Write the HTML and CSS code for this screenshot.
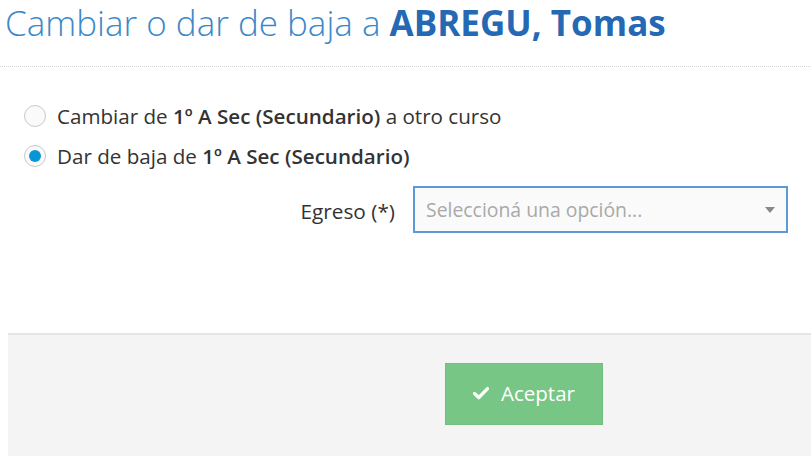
FILE: index.html
```html
<!DOCTYPE html>
<html lang="es">
<head>
<meta charset="utf-8">
<title>Cambiar o dar de baja</title>
<link rel="stylesheet" href="styles.css">
</head>
<body>
<div class="modal">
  <header class="modal-header">
    <h1 class="title">Cambiar o dar de baja a <strong>ABREGU, Tomas</strong></h1>
  </header>
  <section class="modal-body">
    <label class="radio-row">
      <span class="radio"></span>
      <span class="radio-text">Cambiar de <b>1º A Sec (Secundario)</b> a otro curso</span>
    </label>
    <label class="radio-row">
      <span class="radio checked"></span>
      <span class="radio-text">Dar de baja de <b>1º A Sec (Secundario)</b></span>
    </label>
    <div class="field">
      <span class="field-label">Egreso (*)</span>
      <div class="select">
        <span class="placeholder">Seleccioná una opción...</span>
        <span class="caret"></span>
      </div>
    </div>
  </section>
  <footer class="modal-footer">
    <button class="btn-ok" type="button">
      <svg class="check" viewBox="0 0 16 16" width="16" height="16"><path d="M1.5 8.5 L5.8 12.6 L14.5 3.6" fill="none" stroke="#fff" stroke-width="3.4" stroke-linecap="round" stroke-linejoin="round"/></svg>
      <span>Aceptar</span>
    </button>
  </footer>
</div>
</body>
</html>
```

FILE: styles.css
```css
* { box-sizing: border-box; }
html, body { margin: 0; padding: 0; background: #fff; }
body { font-family: "Open Sans", "Noto Sans", sans-serif; color: #333; width: 811px; height: 473px; overflow: hidden; }

.modal-header {
  border-bottom: 1px dotted #d6d6d6;
  height: 67px;
  padding: 0 5px;
}
.title {
  margin: 0;
  padding-top: 0;
  font-size: 35px;
  font-weight: 300;
  color: #3b88c9;
  line-height: 46px;
  white-space: nowrap;
}
.title strong { font-weight: 700; color: #2568b3; }

.modal-body {
  height: 266px;
  padding: 37px 0 0 24px;
}
.radio-row {
  display: flex;
  align-items: center;
  height: 24px;
  margin-bottom: 16px;
  font-size: 20.6px;
  color: #333;
}
.radio {
  width: 22px;
  height: 22px;
  border-radius: 50%;
  border: 1px solid #c9c9c9;
  background: #fafafa;
  margin-right: 11px;
  flex: none;
  position: relative;
}
.radio.checked::after {
  content: "";
  position: absolute;
  left: 4px; top: 4px;
  width: 12px; height: 12px;
  border-radius: 50%;
  background: #0996d7;
}
.radio-text b { font-weight: 600; }

.field {
  display: flex;
  align-items: center;
  margin-top: 18px;
  padding-left: 252px;
}
.field-label {
  font-size: 20.8px;
  color: #333;
  width: 137px;
  text-align: right;
  padding-right: 18px;
  padding-top: 2px;
}
.select {
  width: 375px;
  height: 47px;
  border: 2px solid #5a9ad6;
  background: #fafafa;
  display: flex;
  align-items: center;
  justify-content: space-between;
  padding: 0 11px 0 11px;
}
.placeholder { font-size: 19.4px; color: #a9a9a9; }
.caret {
  width: 0; height: 0;
  border-left: 5px solid transparent;
  border-right: 5px solid transparent;
  border-top: 6px solid #888;
}

.modal-footer {
  margin-left: 8px;
  height: 123px;
  background: #f4f4f4;
  border-top: 2px solid #e6e6e6;
  padding-top: 28px;
  padding-left: 437px;
}
.btn-ok {
  width: 158px;
  height: 62px;
  background: #78c685;
  border: 1px solid #6fc17d;
  color: #fff;
  font-family: "Open Sans", "Noto Sans", sans-serif;
  font-size: 20.5px;
  display: flex;
  align-items: center;
  justify-content: center;
  gap: 12px;
  padding: 0 0 2px 0;
  cursor: pointer;
}
.check { flex: none; }
```
